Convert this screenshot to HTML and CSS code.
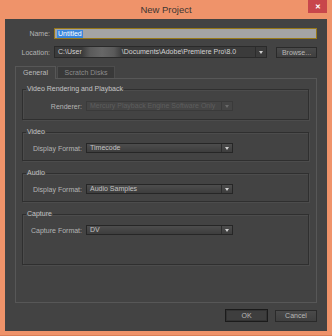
FILE: index.html
```html
<!DOCTYPE html>
<html lang="en">
<head>
  <meta charset="UTF-8" />
  <title>New Project</title>
  <link rel="stylesheet" href="styles.css">
</head>
<body>
  <div class="window">
    <div class="titlebar">
      <div></div>
      <div class="title">New Project</div>
      <div class="close">&#x2715;</div>
    </div>

    <div class="content">
      <div class="form-row name-row">
        <label>Name:</label>
        <div class="text-input"><span class="selected">Untitled</span></div>
      </div>

      <div class="form-row location-row">
        <label>Location:</label>
        <div class="location">
          <div class="combo combo-dark">
            <div class="combo-text">C:\User<span class="blur"></span>\Documents\Adobe\Premiere Pro\8.0</div>
            <div class="combo-btn"><span class="arrow"></span></div>
          </div>
          <button class="btn browse">Browse...</button>
        </div>
      </div>

      <div class="tabs">
        <div class="tab active">General</div>
        <div class="tab">Scratch Disks</div>
      </div>

      <div class="panel">
        <fieldset class="group">
          <legend>Video Rendering and Playback</legend>
          <div class="group-row">
            <label>Renderer:</label>
            <div class="combo disabled">
              <div class="combo-text">Mercury Playback Engine Software Only</div>
              <div class="combo-btn"><span class="arrow"></span></div>
            </div>
          </div>
        </fieldset>

        <fieldset class="group">
          <legend>Video</legend>
          <div class="group-row">
            <label>Display Format:</label>
            <div class="combo">
              <div class="combo-text">Timecode</div>
              <div class="combo-btn"><span class="arrow"></span></div>
            </div>
          </div>
        </fieldset>

        <fieldset class="group">
          <legend>Audio</legend>
          <div class="group-row">
            <label>Display Format:</label>
            <div class="combo">
              <div class="combo-text">Audio Samples</div>
              <div class="combo-btn"><span class="arrow"></span></div>
            </div>
          </div>
        </fieldset>

        <fieldset class="group capture">
          <legend>Capture</legend>
          <div class="group-row">
            <label>Capture Format:</label>
            <div class="combo">
              <div class="combo-text">DV</div>
              <div class="combo-btn"><span class="arrow"></span></div>
            </div>
          </div>
        </fieldset>
      </div>

      <div class="buttons">
        <button class="btn ok">OK</button>
        <button class="btn cancel">Cancel</button>
      </div>
    </div>
  </div>
</body>
</html>
```

FILE: styles.css
```css
body {
  margin: 0;
  background: #ef936a;
  font-family: "Liberation Sans", Arial, sans-serif;
  font-size: 7px;
  color: #b4b4b4;
}

.window {
  width: 332px;
  height: 336px;
  display: flex;
  flex-direction: column;
  box-sizing: border-box;
  border-bottom: 1px solid #d97e57;
}

.titlebar {
  height: 19px;
  display: grid;
  grid-template-columns: 1fr auto 1fr;
  align-items: start;
}

.title {
  font-size: 9.5px;
  color: #3e3632;
  line-height: 19px;
}

.close {
  justify-self: end;
  margin-right: 5px;
  width: 19px;
  height: 13px;
  background: #c8464b;
  color: #fff;
  font-size: 7px;
  font-weight: bold;
  line-height: 13px;
  text-align: center;
}

.content {
  flex: 1;
  margin: 0 5px 4px;
  background: #434343;
  padding: 9px 10px 0;
  display: flex;
  flex-direction: column;
}

.form-row {
  display: grid;
  grid-template-columns: 35px 1fr;
  gap: 4px;
  align-items: center;
}

.form-row label {
  text-align: right;
  white-space: nowrap;
}

.name-row {
  height: 11px;
}

.location-row {
  height: 12px;
  margin-top: 7px;
}

.text-input {
  height: 11px;
  box-sizing: border-box;
  border: 1px solid #977818;
  background: #a4a4a4;
  padding: 1px 2px;
  display: flex;
  align-items: center;
}

.selected {
  background: #3a86dc;
  color: #fff;
  line-height: 8px;
  padding: 0 1px;
}

.location {
  display: flex;
  gap: 9px;
  height: 12px;
}

.combo {
  display: flex;
  box-sizing: border-box;
  height: 10px;
  border: 1px solid #262626;
  background: linear-gradient(#4d4d4d, #3d3d3d);
  color: #c2c2c2;
}

.combo-text {
  flex: 1;
  padding-left: 3px;
  line-height: 8px;
  white-space: nowrap;
  overflow: hidden;
}

.combo-btn {
  width: 10px;
  border-left: 1px solid #2c2c2c;
  display: flex;
  align-items: center;
  justify-content: center;
}

.arrow {
  width: 0;
  height: 0;
  border-left: 2.5px solid transparent;
  border-right: 2.5px solid transparent;
  border-top: 3px solid #d0d0d0;
}

.combo-dark {
  flex: 1;
  height: 12px;
  background: #3b3b3b;
  border-color: #2a2a2a;
  color: #d2d2d2;
}

.combo-dark .combo-text {
  line-height: 10px;
}

.blur {
  display: inline-block;
  width: 40px;
  height: 10px;
  vertical-align: top;
  background: linear-gradient(90deg, #3b3b3b, #5a5a5a 20%, #676767 50%, #5a5a5a 80%, #3b3b3b);
}

.combo.disabled {
  background: #454545;
  border-color: #3a3a3a;
  color: #5e5e5e;
}

.combo.disabled .combo-btn {
  border-left-color: #3a3a3a;
}

.combo.disabled .arrow {
  border-top-color: #6a6a6a;
}

.btn {
  font: inherit;
  color: #b8b8b8;
  background: linear-gradient(#4a4a4a, #3f3f3f);
  border: 1px solid #2a2a2a;
  padding: 0;
  height: 12px;
  line-height: 10px;
}

.browse {
  width: 41px;
  margin-top: 1px;
  height: 11px;
}

.tabs {
  display: flex;
  margin-top: 8px;
  height: 12px;
  position: relative;
  z-index: 1;
}

.tab {
  box-sizing: border-box;
  height: 12px;
  line-height: 11px;
  padding: 0 6px;
  border: 1px solid #4d4d4d;
  border-bottom: none;
  background: #393939;
  color: #8c8c8c;
  margin-left: 1px;
  width: 58px;
  white-space: nowrap;
  text-align: center;
}

.tab.active {
  width: 41px;
  margin-left: 0;
  height: 13px;
  background: #434343;
  border-color: #575757;
  color: #bcbcbc;
}

.panel {
  height: 225px;
  box-sizing: border-box;
  border: 1px solid #575757;
  padding: 6px 7px 0 6px;
  display: flex;
  flex-direction: column;
  gap: 8px;
}

.group {
  margin: 0;
  padding: 0 0 7px;
  border: 1px solid #2f2f2f;
  box-shadow: 1px 1px 0 #4c4c4c, inset 1px 1px 0 #4c4c4c;
}

.group legend {
  margin-left: 3px;
  padding: 0 1px;
  line-height: 8px;
  color: #c4c4c4;
}

.group-row {
  display: grid;
  grid-template-columns: 59px 147px;
  gap: 4px;
  align-items: center;
  padding-top: 7px;
}

.group-row label {
  text-align: right;
  white-space: nowrap;
}

.group:first-child .group-row {
  padding-top: 8px;
  padding-bottom: 1px;
}

.capture {
  padding-bottom: 29px;
}

.buttons {
  display: flex;
  justify-content: flex-end;
  gap: 7px;
  margin-top: 6px;
}

.ok {
  width: 43px;
  height: 13px;
  border-color: #1b1b1b;
  background: #3e3e3e;
  box-shadow: inset 0 0 0 1px #333;
}

.cancel {
  width: 42px;
  height: 12px;
  margin-top: 1px;
}
```
